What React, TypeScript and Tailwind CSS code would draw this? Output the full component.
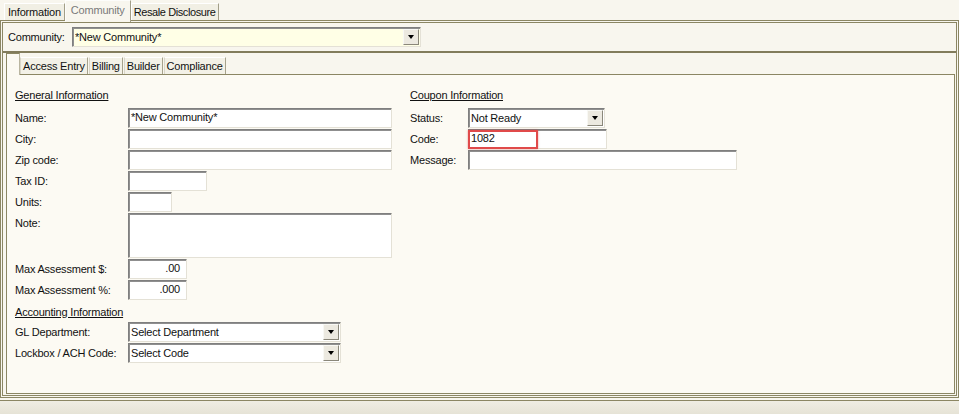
import React from "react";

const sunken =
  "border border-t-[#7f7f7f] border-l-[#7f7f7f] border-r-[#e4e1d6] border-b-[#e4e1d6] shadow-[inset_1px_1px_0_#8f8f8f]";

function Arrow() {
  return (
    <div className="w-[16px] h-[16px] shrink-0 bg-[#ece9e0] border border-t-[#f8f8f4] border-l-[#f8f8f4] border-r-[#8a877a] border-b-[#8a877a] flex items-center justify-center">
      <div className="w-0 h-0 border-l-[3.5px] border-r-[3.5px] border-t-[4px] border-l-transparent border-r-transparent border-t-black" />
    </div>
  );
}

function Combo({ width, value, bg = "bg-white" }: { width: string; value: string; bg?: string }) {
  return (
    <div className={`${width} h-[20px] ${bg} ${sunken} flex items-center pl-[2px] pr-[1px]`}>
      <span className="flex-1 leading-[16px] truncate">{value}</span>
      <Arrow />
    </div>
  );
}

function Input({
  width,
  height = "h-[20px]",
  value = "",
  right = false,
}: {
  width: string;
  height?: string;
  value?: string;
  right?: boolean;
}) {
  return (
    <div
      className={`${width} ${height} bg-white ${sunken} px-[2px] leading-[17px] ${right ? "text-right pr-[6px]" : ""}`}
    >
      {value}
    </div>
  );
}

function Row({
  label,
  labelWidth,
  children,
}: {
  label: string;
  labelWidth: string;
  children: React.ReactNode;
}) {
  return (
    <div className="flex items-start">
      <div className={`${labelWidth} shrink-0 leading-[20px]`}>{label}</div>
      {children}
    </div>
  );
}

export default function App() {
  return (
    <div className="w-[959px] h-[414px] overflow-hidden flex flex-col bg-[#f8f6ee] text-[11px] tracking-[-0.2px] text-[#111] font-['Liberation_Sans',Arial,sans-serif]">
      {/* top tabs */}
      <div className="h-[20px] shrink-0 flex items-end pl-[4px]">
        <div className="h-[17px] px-[3px] leading-[16px] bg-[#f1efe4] border border-b-0 border-t-white border-l-white border-r-[#a29e88]">
          Information
        </div>
        <div className="relative z-10 h-[22px] -mb-[2px] px-[5px] pt-[1px] leading-[16px] text-[#7a7a7a] bg-[#f8f6ee] border border-b-0 border-t-[#fdfdfb] border-l-[#fdfdfb] border-r-[#a29e88]">
          Community
        </div>
        <div className="h-[17px] px-[2px] leading-[16px] tracking-[-0.4px] bg-[#f1efe4] border border-b-0 border-t-white border-l-white border-r-[#a29e88]">
          Resale Disclosure
        </div>
      </div>

      {/* outer frame */}
      <div className="h-[378px] shrink-0 border-[3px] border-double border-[#8b8663] flex flex-col">
        <div className="h-[28px] shrink-0 flex items-center pl-[5px]">
          <div className="w-[64px]">Community:</div>
          <Combo width="w-[349px]" value="*New Community*" bg="bg-[#ffffe6]" />
        </div>
        <div className="h-[2px] shrink-0 bg-[#827c5c]" />

        {/* inner tabs */}
        <div className="h-[21px] shrink-0 flex items-end pl-[3px]">
          <div className="relative z-10 w-[14px] h-[22px] -mb-[1px] bg-[#fcfaf3] border border-b-0 border-t-[#8b8663] border-l-[#8b8663] border-r-[#b9b5a0]" />
          {["Access Entry", "Billing", "Builder", "Compliance"].map((t) => (
            <div
              key={t}
              className="h-[17px] px-[2px] mr-[1px] leading-[16px] bg-[#f3f1e7] border border-b-0 border-t-white border-l-[#d9d6c8] border-r-[#a6a28c]"
            >
              {t}
            </div>
          ))}
        </div>

        {/* inner panel */}
        <div className="flex-1 ml-[3px] mr-[1px] mb-[1px] border border-[#8b8663] bg-[#fcfaf3] flex pt-[13px]">
          {/* left column */}
          <div className="w-[403px] pl-[8px] flex flex-col">
            <div className="h-[14px] leading-[14px] underline underline-offset-1 mb-[6px]">General Information</div>
            <div className="flex flex-col gap-[1px]">
              <Row label="Name:" labelWidth="w-[113px]">
                <Input width="w-[264px]" value="*New Community*" />
              </Row>
              <Row label="City:" labelWidth="w-[113px]">
                <Input width="w-[264px]" />
              </Row>
              <Row label="Zip code:" labelWidth="w-[113px]">
                <Input width="w-[264px]" />
              </Row>
              <Row label="Tax ID:" labelWidth="w-[113px]">
                <Input width="w-[79px]" />
              </Row>
              <Row label="Units:" labelWidth="w-[113px]">
                <Input width="w-[44px]" />
              </Row>
              <Row label="Note:" labelWidth="w-[113px]">
                <Input width="w-[264px]" height="h-[45px]" />
              </Row>
              <Row label="Max Assessment $:" labelWidth="w-[113px]">
                <Input width="w-[59px]" value=".00" right />
              </Row>
              <Row label="Max Assessment %:" labelWidth="w-[113px]">
                <Input width="w-[59px]" value=".000" right />
              </Row>
            </div>
            <div className="h-[14px] leading-[14px] underline underline-offset-1 mt-[5px] mb-[3px]">
              Accounting Information
            </div>
            <div className="flex flex-col gap-[1px]">
              <Row label="GL Department:" labelWidth="w-[113px]">
                <Combo width="w-[213px]" value="Select Department" />
              </Row>
              <Row label="Lockbox / ACH Code:" labelWidth="w-[113px]">
                <Combo width="w-[213px]" value="Select Code" />
              </Row>
            </div>
          </div>

          {/* right column */}
          <div className="flex flex-col">
            <div className="h-[14px] leading-[14px] underline underline-offset-1 mb-[6px]">Coupon Information</div>
            <div className="flex flex-col gap-[1px]">
              <Row label="Status:" labelWidth="w-[58px]">
                <Combo width="w-[137px]" value="Not Ready" />
              </Row>
              <Row label="Code:" labelWidth="w-[58px]">
                <div className="relative">
                  <Input width="w-[139px]" value="1082" />
                  <div className="absolute left-0 top-[1px] w-[70px] h-[19px] border-2 border-[#e04a4a] shadow-[0_0_2px_rgba(200,60,60,0.5)]" />
                </div>
              </Row>
              <Row label="Message:" labelWidth="w-[58px]">
                <Input width="w-[269px]" />
              </Row>
            </div>
          </div>
        </div>
      </div>

      <div className="h-[3px] shrink-0 border-b border-[#8b8663]" />
      <div className="flex-1 bg-gradient-to-b from-[#efede3] to-[#e6e3d6]" />
    </div>
  );
}
